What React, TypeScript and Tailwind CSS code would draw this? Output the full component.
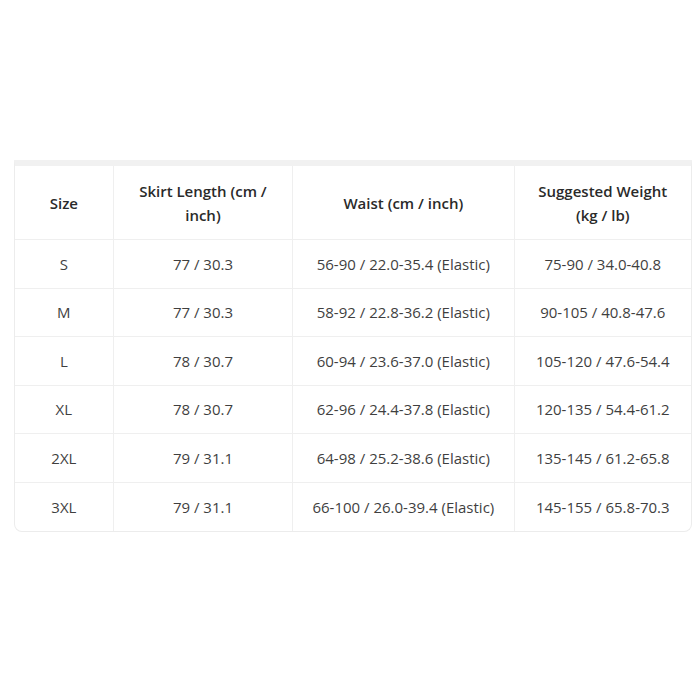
const rows = [
  ["S", "77 / 30.3", "56-90 / 22.0-35.4 (Elastic)", "75-90 / 34.0-40.8"],
  ["M", "77 / 30.3", "58-92 / 22.8-36.2 (Elastic)", "90-105 / 40.8-47.6"],
  ["L", "78 / 30.7", "60-94 / 23.6-37.0 (Elastic)", "105-120 / 47.6-54.4"],
  ["XL", "78 / 30.7", "62-96 / 24.4-37.8 (Elastic)", "120-135 / 54.4-61.2"],
  ["2XL", "79 / 31.1", "64-98 / 25.2-38.6 (Elastic)", "135-145 / 61.2-65.8"],
  ["3XL", "79 / 31.1", "66-100 / 26.0-39.4 (Elastic)", "145-155 / 65.8-70.3"],
];

const widths = ["w-[98px]", "w-[180px]", "w-[222px]", "w-[178px]"];

export default function App() {
  return (
    <div
      className="w-[700px] h-[700px] bg-white pt-[160px] pl-[14px]"
      style={{ fontFamily: '"Open Sans", "Noto Sans", sans-serif' }}
    >
      <div className="w-[678px] border-t-[6px] border-t-[#f1f1f1] border-x border-b border-[#ececec] rounded-b-lg overflow-hidden">
        {/* header */}
        <div className="flex h-[74px] border-b border-[#efefef] text-[15px] font-semibold text-[#2a2a2a] leading-6">
          <div className={`${widths[0]} flex items-center justify-center`}>Size</div>
          <div className={`${widths[1]} flex items-center justify-center text-center border-l border-[#efefef]`}>
            <span className="whitespace-nowrap">
              Skirt Length (cm /
              <br />
              inch)
            </span>
          </div>
          <div className={`${widths[2]} flex items-center justify-center border-l border-[#efefef]`}>
            Waist (cm / inch)
          </div>
          <div className={`${widths[3]} flex items-center justify-center text-center border-l border-[#efefef]`}>
            <span className="whitespace-nowrap">
              Suggested Weight
              <br />
              (kg / lb)
            </span>
          </div>
        </div>
        {rows.map((r, i) => (
          <div
            key={r[0]}
            className={`flex h-[48.5px] text-[15px] text-[#3f3f3f] ${i < rows.length - 1 ? "border-b border-[#efefef]" : ""}`}
          >
            {r.map((c, j) => (
              <div
                key={j}
                className={`${widths[j]} flex items-center justify-center ${j > 0 ? "border-l border-[#efefef]" : ""}`}
              >
                {c}
              </div>
            ))}
          </div>
        ))}
      </div>
    </div>
  );
}
